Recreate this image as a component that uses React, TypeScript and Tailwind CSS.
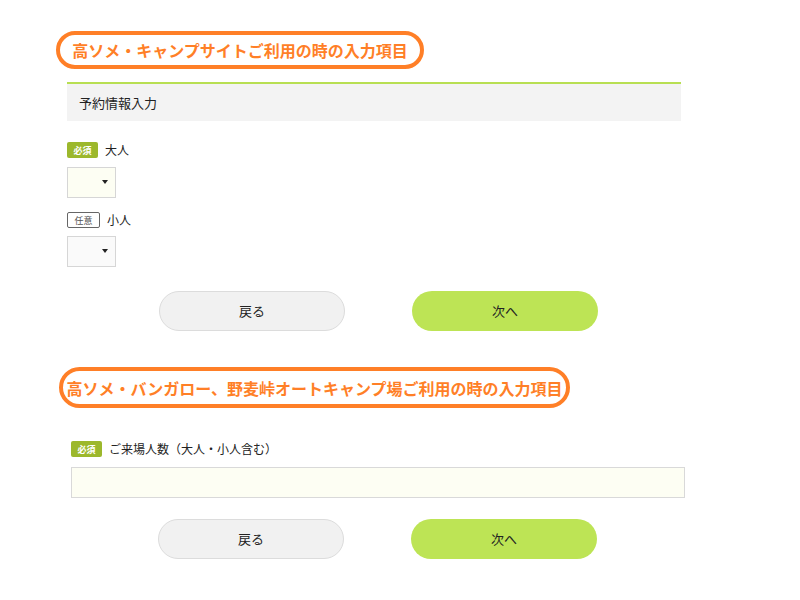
const font = { fontFamily: '"Noto Sans CJK JP", "Noto Sans", sans-serif' };

function Oval({ children, className }: { children: string; className: string }) {
  return (
    <div
      className={`flex items-center justify-center rounded-[22px] border-4 border-[#ff7f27] text-[16px] leading-none font-bold text-[#ff7f27] ${className}`}
    >
      {children}
    </div>
  );
}

function Badge({ required }: { required?: boolean }) {
  return required ? (
    <span className="flex h-[16px] w-[31px] items-center justify-center rounded-[2px] bg-[#9cb82c] text-[9px] leading-none font-bold text-white">
      必須
    </span>
  ) : (
    <span className="flex h-[16px] w-[33px] items-center justify-center rounded-[2px] border border-[#666] bg-white text-[9px] leading-none text-[#555]">
      任意
    </span>
  );
}

function Select({ bg }: { bg: string }) {
  return (
    <div className={`relative h-[31px] w-[49px] border border-[#d6d6d6] ${bg}`}>
      <span className="absolute right-[7px] top-[12px] h-0 w-0 border-x-[3.5px] border-t-[4px] border-x-transparent border-t-[#222]" />
    </div>
  );
}

function Buttons({ className }: { className: string }) {
  return (
    <div className={`flex justify-center gap-[67px] ${className}`}>
      <button className="h-[40px] w-[186px] rounded-full border border-[#dcdcdc] bg-[#f1f1f1] text-[13px] text-[#222]">
        戻る
      </button>
      <button className="h-[40px] w-[186px] rounded-full bg-[#bde455] text-[13px] text-[#222]">
        次へ
      </button>
    </div>
  );
}

export default function App() {
  return (
    <div className="h-[600px] w-[800px] bg-white pt-[31px]" style={font}>
      <Oval className="ml-[56px] h-[38px] w-[368px]">高ソメ・キャンプサイトご利用の時の入力項目</Oval>

      <section className="ml-[67px] mt-[13px] w-[614px]">
        <div className="flex h-[39px] items-center border-t-2 border-[#b8df52] bg-[#f3f3f3] pl-[12px] text-[13px] text-[#222]">
          予約情報入力
        </div>

        <div className="mt-[21px] flex h-[16px] items-center gap-[7px]">
          <Badge required />
          <span className="text-[12px] leading-none text-[#222]">大人</span>
        </div>
        <div className="mt-[9px]">
          <Select bg="bg-[#fdfef3]" />
        </div>

        <div className="mt-[14px] flex h-[16px] items-center gap-[7px]">
          <Badge />
          <span className="text-[12px] leading-none text-[#222]">小人</span>
        </div>
        <div className="mt-[8px]">
          <Select bg="bg-[#fafafa]" />
        </div>

        <div className="mt-[24px]">
          <Buttons className="pl-[9px]" />
        </div>
      </section>

      <Oval className="ml-[59px] mt-[36px] h-[41px] w-[511px]">
        高ソメ・バンガロー、野麦峠オートキャンプ場ご利用の時の入力項目
      </Oval>

      <section className="ml-[71px] mt-[33px] w-[614px]">
        <div className="flex h-[16px] items-center gap-[7px]">
          <Badge required />
          <span className="text-[12px] leading-none text-[#222]">ご来場人数（大人・小人含む）</span>
        </div>
        <div className="mt-[10px] h-[31px] w-full border border-[#d9d9d9] bg-[#fdfef3]" />
        <div className="mt-[21px]">
          <Buttons className="pr-[1px]" />
        </div>
      </section>
    </div>
  );
}
